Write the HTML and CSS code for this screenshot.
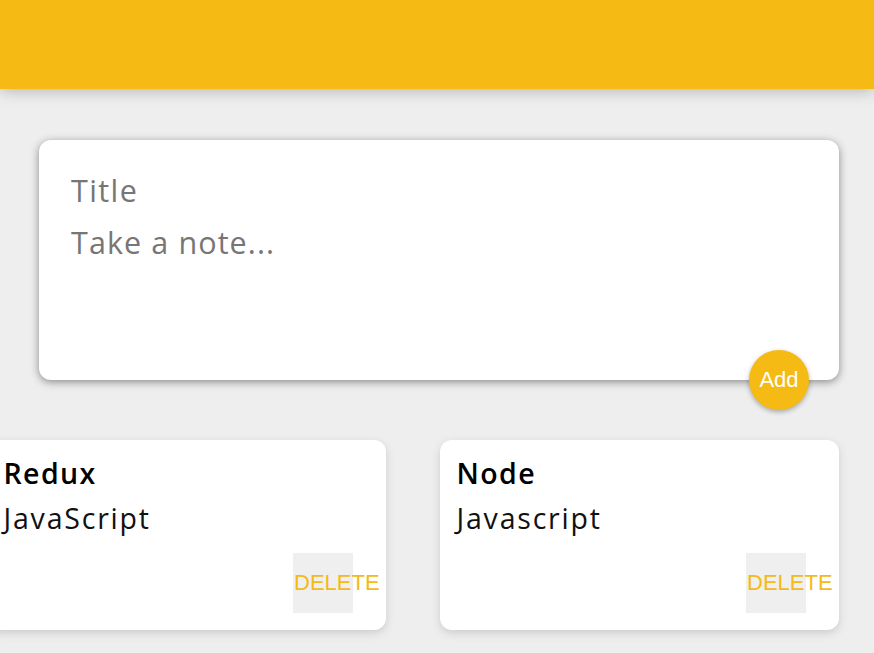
FILE: index.html
```html
<!DOCTYPE html>
<html lang="en">
<head>
<meta charset="utf-8">
<title>Keeper</title>
<link rel="stylesheet" href="styles.css">
</head>
<body>
<header class="topbar"></header>
<main class="page">
  <form class="create-note">
    <div class="field field-title">Title</div>
    <div class="field field-body">Take a note...</div>
    <button type="button" class="add-btn">Add</button>
  </form>
  <section class="notes">
    <article class="note">
      <h1 class="note-title">Redux</h1>
      <p class="note-text">JavaScript</p>
      <button type="button" class="delete-btn">DELETE</button>
    </article>
    <article class="note">
      <h1 class="note-title">Node</h1>
      <p class="note-text">Javascript</p>
      <button type="button" class="delete-btn">DELETE</button>
    </article>
  </section>
</main>
</body>
</html>
```
FILE: styles.css
```css
* { box-sizing: border-box; }
html, body {
  margin: 0;
  padding: 0;
  background: #eeeeee;
  overflow: hidden;
}
body {
  font-family: "Open Sans", "DejaVu Sans", sans-serif;
  width: 874px;
  height: 653px;
}
.topbar {
  height: 89px;
  background: #f5ba13;
  box-shadow: 0 0 16px 0 rgba(0, 0, 0, 0.3);
  position: relative;
  z-index: 1;
}
.page {
  padding-top: 51px;
}
.create-note {
  position: relative;
  margin: 0 0 0 39px;
  width: 800px;
  height: 240px;
  background: #fff;
  border-radius: 12px;
  padding: 25px;
  box-shadow: 0 2px 8px rgb(138, 137, 137);
}
.field {
  font-size: 30.5px;
  line-height: 36px;
  color: #767676;
  padding: 0 7px;
  letter-spacing: 1.1px;
}
.field-title { padding-top: 7px; letter-spacing: 1.4px; }
.field-body { padding-top: 15.5px; }
.add-btn {
  position: absolute;
  right: 30px;
  bottom: -30px;
  width: 60px;
  height: 60px;
  border: none;
  border-radius: 50%;
  background: #f5ba13;
  color: #fff;
  font-family: "Liberation Sans", Arial, sans-serif;
  font-size: 22px;
  padding: 0;
  box-shadow: 0 2px 5px rgba(0, 0, 0, 0.3);
}
.notes {
  margin-top: 60px;
  display: flex;
  justify-content: flex-end;
  gap: 54px;
  padding-right: 35px;
}
.note {
  flex: 0 0 399px;
  height: 190px;
  background: #fff;
  border-radius: 12px;
  padding: 15px 16.5px 17px;
  box-shadow: 0 3px 8px #cccccc;
}
.note-title {
  margin: 0 0 9px;
  font-size: 28.5px;
  line-height: 36px;
  font-weight: 600;
  color: #000;
  letter-spacing: 1.4px;
}
.note-text {
  margin: 0 0 17px;
  font-size: 28.5px;
  line-height: 36px;
  font-weight: 400;
  color: #111;
  letter-spacing: 1.8px;
}
.delete-btn {
  float: right;
  margin-right: 16.5px;
  width: 60px;
  height: 60px;
  border: none;
  background: #efefef;
  color: #f5ba13;
  font-family: "Liberation Sans", Arial, sans-serif;
  font-size: 22px;
  padding: 0 0 0 1px;
  text-align: left;
  white-space: nowrap;
  overflow: visible;
}
```
